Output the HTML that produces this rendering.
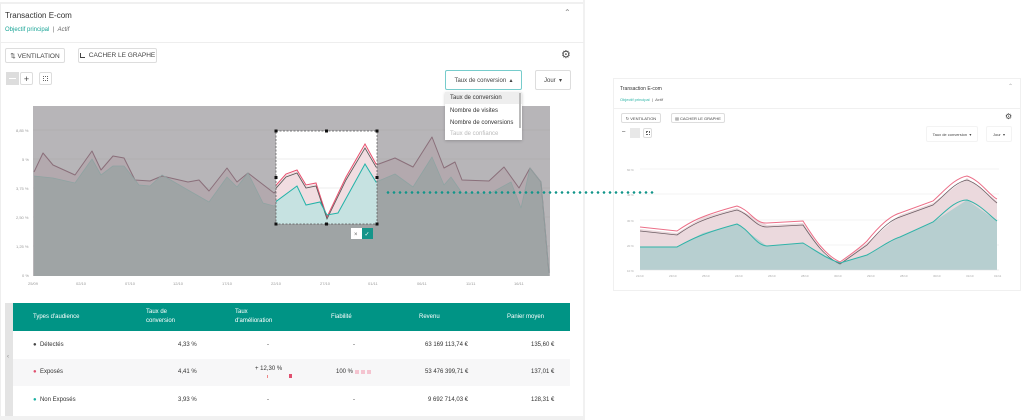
<!DOCTYPE html>
<html><head><meta charset="utf-8"><style>
*{box-sizing:border-box;margin:0;padding:0}
body{width:1024px;height:420px;background:#fff;font-family:"Liberation Sans",sans-serif;position:relative;overflow:hidden;color:#333}
.a{position:absolute}
.btn{position:absolute;border:1px solid #ddd;background:#fff;font-size:6.5px;color:#444;display:flex;align-items:center;justify-content:center;border-radius:2px;white-space:nowrap}
.t{position:absolute;font-size:6px;color:#333;white-space:nowrap}
.th{position:absolute;font-size:6px;color:#fff;line-height:9px}
</style></head><body>
<div class="a" style="left:0;top:2px;width:584px;height:418px;border:1px solid #eee;border-top:2px solid #f0f0f0"></div>
<div class="a" style="left:583px;top:0;width:2px;height:420px;background:#f1f1f1"></div>
<div class="t" style="left:5px;top:11px;font-size:8px">Transaction E-com</div>
<div class="t" style="left:564px;top:8px;font-size:8px;color:#888">&#8963;</div>
<div class="t" style="left:5px;top:27px;font-size:6px;color:#1aa597">Objectif principal <span style="color:#666">&nbsp;| &nbsp;<i>Actif</i></span></div>
<div class="a" style="left:0;top:42px;width:584px;height:1px;background:#eee"></div>
<div class="btn" style="left:5px;top:48px;width:60px;height:15px">&#8645; VENTILATION</div>
<div class="btn" style="left:78px;top:48px;width:79px;height:15px"><span style="display:inline-block;width:5px;height:5px;border-left:1px solid #444;border-bottom:1px solid #444;margin-right:4px"></span>CACHER LE GRAPHE</div>
<div class="t" style="left:561px;top:48px;font-size:11px;color:#444">&#9881;</div>
<div class="a" style="left:6px;top:72px;width:13px;height:13px;background:#ddd;border:1px solid #ddd"></div>
<div class="a" style="left:9px;top:78px;width:7px;height:1px;background:#fff"></div>
<div class="btn" style="left:20px;top:72px;width:13px;height:13px;font-size:9px">+</div>
<div class="btn" style="left:39px;top:72px;width:13px;height:13px"><span style="display:inline-block;width:5px;height:5px;border:1px dotted #666"></span></div>
<div class="btn" style="left:445px;top:70px;width:77px;height:20px;border-color:#7cc;font-size:6px">Taux de conversion &nbsp;&#9652;</div>
<div class="btn" style="left:535px;top:70px;width:36px;height:20px;font-size:6px">Jour &nbsp;&#9662;</div>
<svg class="a" style="left:0;top:100px" width="584" height="195" viewBox="0 100 584 195">
<defs><clipPath id="c"><rect x="276" y="131" width="101" height="93"/></clipPath></defs>
<rect x="33" y="106" width="517" height="170" fill="#b7b5b8"/>
<g stroke="#a9a7aa" stroke-width="0.5"><line x1="33" y1="130" x2="550" y2="130"/><line x1="33" y1="159" x2="550" y2="159"/><line x1="33" y1="188" x2="550" y2="188"/><line x1="33" y1="217" x2="550" y2="217"/><line x1="33" y1="246" x2="550" y2="246"/></g>
<polygon fill="#b3a9ae" points="34,172 43,153 53,165 75,175 92,151 101,170 113,156 124,158 135,180 150,181 162,176 188,182 199,180 209,191 227,168 237,182 248,173 274,193 297,172 316,185 327,218 346,178 365,146 376,165 395,158 413,167 432,137 444,168 455,162 462,180 489,181 504,167 519,188 530,168 541,182 549,273 549,276 34,276"/>
<polygon fill="#9fa4a5" points="34,176 53,178 75,183 92,159 101,175 113,166 124,166 139,185 150,186 162,175 188,190 209,202 227,177 237,187 248,173 263,203 274,206 297,186 306,205 320,202 327,215 338,213 365,164 376,182 395,174 413,187 432,157 444,185 451,177 462,193 489,194 511,182 521,208 530,168 541,182 549,273 549,276 34,276"/>
<polyline fill="none" stroke="#8a6f7a" stroke-width="1" stroke-linejoin="round" points="34,172 43,153 53,165 75,175 92,151 101,170 113,156 124,158 135,180 150,181 162,176 188,182 199,180 209,191 227,168 237,182 248,173 274,193 297,172 316,185 327,218 346,178 365,146 376,165 395,158 413,167 432,137 444,168 455,162 462,180 489,181 504,167 519,188 530,168 541,182 549,273"/>
<polyline fill="none" stroke="#8fa3a2" stroke-width="0.8" stroke-linejoin="round" points="34,176 53,178 75,183 92,159 101,175 113,166 124,166 139,185 150,186 162,175 188,190 209,202 227,177 237,187 248,173 263,203 274,206 297,186 306,205 320,202 327,215 338,213 365,164 376,182 395,174 413,187 432,157 444,185 451,177 462,193 489,194 511,182 521,208 530,168 541,182 549,273"/>
<g clip-path="url(#c)">
<rect x="276" y="131" width="101" height="93" fill="#fff"/>
<g stroke="#ddd" stroke-width="0.5"><line x1="276" y1="159" x2="377" y2="159"/><line x1="276" y1="188" x2="377" y2="188"/><line x1="276" y1="217" x2="377" y2="217"/></g>
<polygon fill="#f1dde1" points="270,193 286,175 297,171 306,186 316,184 327,218 346,178 365,146 376,165 380,165 380,230 270,230"/>
<polygon fill="#c6e2e1" points="270,206 297,186 306,205 320,202 327,215 338,213 365,164 376,182 380,182 380,230 270,230"/>
<polyline fill="none" stroke="#e8506e" stroke-width="1" points="270,192 286,174 297,170 306,185 316,183 327,217 346,177 365,144 376,164 380,164"/>
<polyline fill="none" stroke="#555" stroke-width="0.8" points="270,195 286,177 297,173 306,188 316,186 327,219 346,180 365,148 376,167 380,167"/>
<polyline fill="none" stroke="#23b2a8" stroke-width="1" points="270,206 297,186 306,205 320,202 327,215 338,213 365,164 376,182 380,182"/>
</g>
<rect x="276" y="131" width="101" height="93" fill="none" stroke="#555" stroke-width="0.7" stroke-dasharray="2,1.5"/>
<g fill="#111"><rect x="274.5" y="129.5" width="3" height="3"/><rect x="325" y="129.5" width="3" height="3"/><rect x="375.5" y="129.5" width="3" height="3"/><rect x="274.5" y="176" width="3" height="3"/><rect x="375.5" y="176" width="3" height="3"/><rect x="274.5" y="222.5" width="3" height="3"/><rect x="325" y="222.5" width="3" height="3"/><rect x="375.5" y="222.5" width="3" height="3"/></g>
<rect x="351" y="228" width="11" height="11" fill="#fff"/><text x="354" y="236" font-size="6" fill="#666">&#215;</text>
<rect x="362" y="228" width="11" height="11" fill="#16958a"/><text x="364.5" y="236" font-size="6" fill="#fff">&#10003;</text>
<g font-size="4" fill="#999" font-family="Liberation Sans"><text x="16" y="132">8,85 %</text><text x="22" y="161">5 %</text><text x="16" y="190">3,75 %</text><text x="16" y="219">2,50 %</text><text x="16" y="248">1,25 %</text><text x="22" y="277">0 %</text>
<text x="28" y="285">25/09</text><text x="76" y="285">02/10</text><text x="125" y="285">07/10</text><text x="173" y="285">12/10</text><text x="222" y="285">17/10</text><text x="271" y="285">22/10</text><text x="320" y="285">27/10</text><text x="368" y="285">01/11</text><text x="417" y="285">06/11</text><text x="466" y="285">11/11</text><text x="514" y="285">16/11</text></g>
</svg>
<div class="a" style="left:445px;top:92px;width:77px;height:48px;background:#fff;box-shadow:0 1px 3px rgba(0,0,0,.2);overflow:hidden">
<div style="height:12px;background:#eee;font-size:6px;padding:3px 5px;color:#333">Taux de conversion</div>
<div style="height:13px;font-size:6px;padding:4px 5px;color:#333">Nombre de visites</div>
<div style="height:12px;font-size:6px;padding:3px 5px;color:#333">Nombre de conversions</div>
<div style="height:12px;font-size:6px;padding:2px 5px;color:#bbb">Taux de confiance</div>
<div class="a" style="right:1px;top:1px;width:2px;height:35px;background:#bbb"></div>
</div>
<div class="a" style="left:385px;top:191px;width:270px;height:3px;background-image:radial-gradient(circle,#12958a 1.2px,transparent 1.4px);background-size:6px 3px"></div>
<div class="a" style="left:5px;top:303px;width:8px;height:115px;background:#e4e4e4"></div>
<div class="t" style="left:7px;top:354px;color:#888">&#8249;</div>
<div class="a" style="left:13px;top:303px;width:557px;height:28px;background:#009485"></div>
<div class="th" style="left:33px;top:313px">Types d'audience</div>
<div class="th" style="left:146px;top:308px">Taux de<br>conversion</div>
<div class="th" style="left:235px;top:308px">Taux<br>d'amélioration</div>
<div class="th" style="left:331px;top:313px">Fiabilité</div>
<div class="th" style="left:419px;top:313px">Revenu</div>
<div class="th" style="left:507px;top:313px">Panier moyen</div>
<div class="a" style="left:13px;top:359px;width:557px;height:27px;background:#f7f7f8"></div>
<div class="t" style="left:33px;top:342px"><span style="color:#444">&#9679;</span> &nbsp;Détectés</div>
<div class="t" style="left:178px;top:342px">4,33 %</div>
<div class="t" style="left:267px;top:342px">-</div>
<div class="t" style="left:353px;top:342px">-</div>
<div class="t" style="left:425px;top:342px">63 169 113,74 €</div>
<div class="t" style="left:531px;top:342px">135,60 €</div>
<div class="t" style="left:33px;top:369px"><span style="color:#e0506f">&#9679;</span> &nbsp;Exposés</div>
<div class="t" style="left:178px;top:369px">4,41 %</div>
<div class="t" style="left:255px;top:366px">+ 12,30 %</div>
<div class="a" style="left:267px;top:375px;width:1px;height:3px;background:#e88"></div>
<div class="a" style="left:289px;top:374px;width:3px;height:4px;background:#e0506f"></div>
<div class="t" style="left:336px;top:369px">100 %</div>
<div class="a" style="left:355px;top:370px;width:4px;height:4px;background:#f4c4d0"></div>
<div class="a" style="left:361px;top:370px;width:4px;height:4px;background:#f4c4d0"></div>
<div class="a" style="left:367px;top:370px;width:4px;height:4px;background:#f4c4d0"></div>
<div class="t" style="left:425px;top:369px">53 476 399,71 €</div>
<div class="t" style="left:531px;top:369px">137,01 €</div>
<div class="t" style="left:33px;top:397px"><span style="color:#1ab0a2">&#9679;</span> &nbsp;Non Exposés</div>
<div class="t" style="left:178px;top:397px">3,93 %</div>
<div class="t" style="left:267px;top:397px">-</div>
<div class="t" style="left:353px;top:397px">-</div>
<div class="t" style="left:428px;top:397px">9 692 714,03 €</div>
<div class="t" style="left:531px;top:397px">128,31 €</div>
<div class="a" style="left:0;top:416px;width:584px;height:4px;background:#f1f1f1"></div>
<div class="a" style="left:613px;top:78px;width:408px;height:213px;border:1px solid #f0f0f0"></div>
<div class="t" style="left:620px;top:86px;font-size:5px">Transaction E-com</div>
<div class="t" style="left:1008px;top:83px;font-size:6px;color:#aaa">&#8963;</div>
<div class="t" style="left:620px;top:97px;font-size:4px;color:#2ab3a6">Objectif principal <span style="color:#555">&nbsp;| &nbsp;<i>Actif</i></span></div>
<div class="a" style="left:613px;top:108px;width:408px;height:1px;background:#f0f0f0"></div>
<div class="btn" style="left:621px;top:113px;width:40px;height:10px;font-size:4px">&#8635; VENTILATION</div>
<div class="btn" style="left:671px;top:113px;width:54px;height:10px;font-size:4px">&#9636; CACHER LE GRAPHE</div>
<div class="t" style="left:1005px;top:112px;font-size:8px;color:#444">&#9881;</div>
<div class="t" style="left:622px;top:129px;font-size:6px">&#8211;</div>
<div class="a" style="left:630px;top:128px;width:10px;height:10px;background:#e8e8e8"></div>
<div class="btn" style="left:643px;top:128px;width:9px;height:10px"><span style="display:inline-block;width:4px;height:4px;border:1px dotted #666"></span></div>
<div class="btn" style="left:926px;top:126px;width:52px;height:16px;font-size:4px;border-color:#f3f3f3">Taux de conversion &nbsp;&#9662;</div>
<div class="btn" style="left:986px;top:126px;width:26px;height:16px;font-size:4px;border-color:#f3f3f3">Jour &nbsp;&#9662;</div>
<svg class="a" style="left:613px;top:160px" width="400" height="125" viewBox="613 160 400 125">
<g stroke="#e8e8e8" stroke-width="0.6"><line x1="640" y1="169" x2="999" y2="169"/><line x1="640" y1="194" x2="999" y2="194"/><line x1="640" y1="220" x2="999" y2="220"/><line x1="640" y1="245" x2="999" y2="245"/></g>
<polygon fill="#ebd9dd" points="640,229 677,233 703,217 737,208 767,225 803,223 830,262 840,263 867,243 900,215 933,203 967,178 997,201 997,270 640,270"/>
<polygon fill="#b7cfd0" points="640,247 677,247 703,233 737,224 767,246 803,243 830,258 840,263 867,255 900,237 933,222 967,200 997,221 997,270 640,270"/>
<path fill="none" stroke="#ec6f88" stroke-width="1" d="M640,227 L677,231 C690,222 700,216 737,206 C750,210 755,224 767,223 L803,221 C815,240 825,255 840,262 C850,255 860,248 867,241 C880,225 890,216 900,213 L933,201 C945,190 955,178 967,176 C980,180 990,196 997,199"/>
<path fill="none" stroke="#6d5e64" stroke-width="0.8" d="M640,231 L677,235 C690,226 700,219 737,210 C750,214 755,227 767,227 L803,225 C815,243 825,257 840,264 C850,257 860,250 867,245 C880,230 890,220 900,217 L933,205 C945,195 955,182 967,180 C980,184 990,198 997,203"/>
<path fill="none" stroke="#2fb3a8" stroke-width="1" d="M640,247 L677,247 C690,240 700,234 737,224 C750,230 755,245 767,246 L803,243 C815,250 825,258 840,263 L867,255 C880,248 890,240 900,237 L933,222 C945,212 955,200 967,200 C980,204 990,216 997,221"/>
<line x1="640" y1="270" x2="999" y2="270" stroke="#ddd" stroke-width="0.6"/>
<g font-size="3" fill="#aaa" font-family="Liberation Sans"><text x="627" y="171">60 %</text><text x="627" y="196">40 %</text><text x="627" y="222">30 %</text><text x="627" y="247">20 %</text><text x="627" y="272">10 %</text>
<text x="636" y="277">21/10</text><text x="669" y="277">23/10</text><text x="702" y="277">25/10</text><text x="735" y="277">24/10</text><text x="768" y="277">26/10</text><text x="801" y="277">28/10</text><text x="834" y="277">30/10</text><text x="867" y="277">29/10</text><text x="900" y="277">28/10</text><text x="933" y="277">30/10</text><text x="966" y="277">31/10</text><text x="994" y="277">01/11</text></g>
</svg>
</body></html>
